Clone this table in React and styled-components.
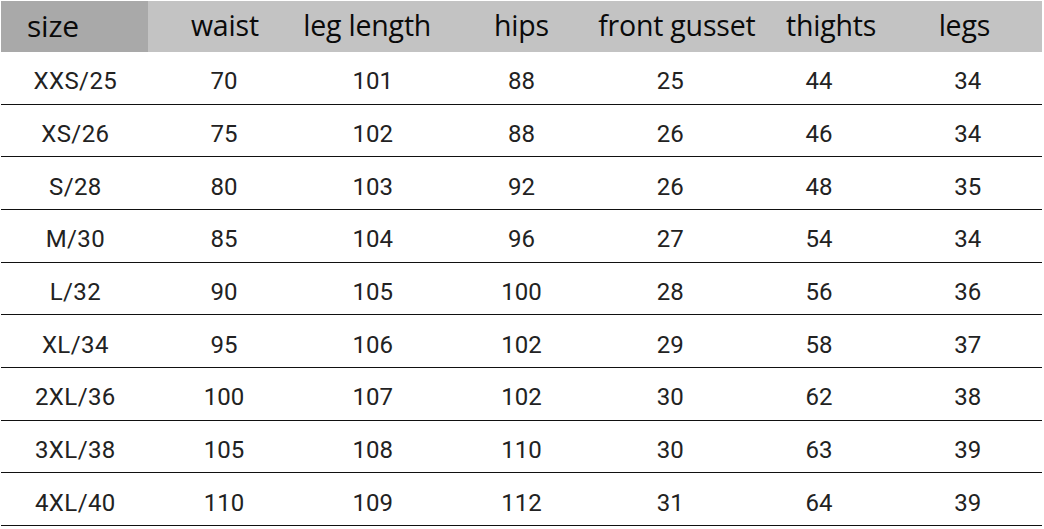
import React from "react";
import styled, { createGlobalStyle } from "styled-components";

const Global = createGlobalStyle`
  html, body { margin: 0; padding: 0; background: #fff; }
  body { font-family: "Open Sans", sans-serif; }
`;

const Table = styled.div`
  width: 1041px;
  padding: 1px 0 0 1px;
`;

const HeaderRow = styled.div`
  display: grid;
  grid-template-columns: repeat(7, 1fr);
  height: 51px;
  background: #c3c3c3;
`;

const HeadCell = styled.div`
  display: flex;
  align-items: center;
  justify-content: ${(p) => (p.$first ? "flex-start" : "center")};
  padding-left: ${(p) => (p.$first ? "26px" : "0")};
  padding-bottom: 3px;
  margin-left: ${(p) => p.$shift || 0}px;
  margin-right: ${(p) => -(p.$shift || 0)}px;
  background: ${(p) => (p.$first ? "#a9a9a9" : "transparent")};
  font-family: "Open Sans", sans-serif;
  font-size: ${(p) => (p.$first ? "30px" : "28.5px")};
  color: #0a0a0a;
  white-space: nowrap;
  letter-spacing: -0.2px;
`;

const Row = styled.div`
  display: grid;
  grid-template-columns: repeat(7, 1fr);
  height: 52.67px;
  box-sizing: border-box;
  border-bottom: 1.6px solid #111;
`;

const Cell = styled.div`
  display: flex;
  align-items: center;
  justify-content: center;
  padding-top: 7px;
  font-family: Roboto, "Liberation Sans", sans-serif;
  font-size: 24px;
  color: #222;
  letter-spacing: ${(p) => (p.$size ? "0.4px" : "0")};
`;

const headers = [
  ["size", 0],
  ["waist", 3],
  ["leg length", -2],
  ["hips", 5],
  ["front gusset", 8],
  ["thights", 10],
  ["legs", -4],
];

const data = [
  ["XXS/25", 70, 101, 88, 25, 44, 34],
  ["XS/26", 75, 102, 88, 26, 46, 34],
  ["S/28", 80, 103, 92, 26, 48, 35],
  ["M/30", 85, 104, 96, 27, 54, 34],
  ["L/32", 90, 105, 100, 28, 56, 36],
  ["XL/34", 95, 106, 102, 29, 58, 37],
  ["2XL/36", 100, 107, 102, 30, 62, 38],
  ["3XL/38", 105, 108, 110, 30, 63, 39],
  ["4XL/40", 110, 109, 112, 31, 64, 39],
];

export default function App() {
  return (
    <>
      <Global />
      <Table>
        <HeaderRow>
          {headers.map(([h, s], i) => (
            <HeadCell key={h} $first={i === 0} $shift={s}>
              {h}
            </HeadCell>
          ))}
        </HeaderRow>
        {data.map((r) => (
          <Row key={r[0]}>
            {r.map((v, i) => (
              <Cell key={i} $size={i === 0}>
                {v}
              </Cell>
            ))}
          </Row>
        ))}
      </Table>
    </>
  );
}
